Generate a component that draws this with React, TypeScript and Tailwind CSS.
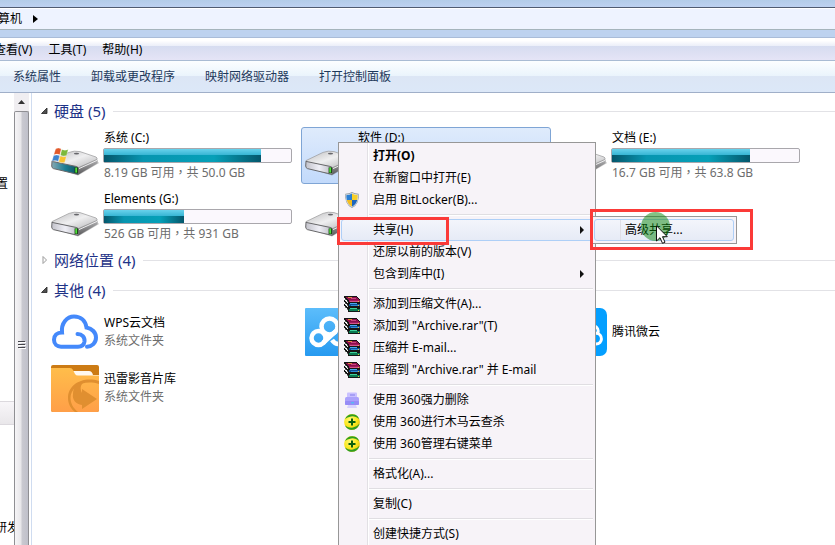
import type { ReactNode } from "react";

const textFont = "font-['Noto_Sans','Noto_Sans_CJK_SC',sans-serif]";

function DriveIcon({ system = false }: { system?: boolean }) {
  const id = system ? "sys" : "hdd";
  return (
    <svg viewBox="0 0 48 48" className="size-12 shrink-0" aria-hidden="true">
      <defs>
        <linearGradient id={`${id}-top`} x1="0" y1="0" x2="1" y2="1">
          <stop offset="0" stopColor="#bcbcbe" />
          <stop offset="0.5" stopColor="#efeff0" />
          <stop offset="1" stopColor="#b4b4b6" />
        </linearGradient>
        <linearGradient id={`${id}-side`} x1="0" y1="0" x2="0" y2="1">
          <stop offset="0" stopColor="#b9b9bb" />
          <stop offset="1" stopColor="#5a5a5c" />
        </linearGradient>
        <linearGradient id={`${id}-front`} x1="0" y1="0" x2="1" y2="0">
          <stop offset="0" stopColor={system ? "#86a9b4" : "#c3c3cb"} />
          <stop offset="0.5" stopColor={system ? "#1d7d93" : "#efeff6"} />
          <stop offset="1" stopColor={system ? "#0f4d5c" : "#b9b9c1"} />
        </linearGradient>
      </defs>
      <path d="M3 36 L27 43.5 L48 31 L46 29 Z" fill="#000" opacity="0.25" />
      <path d="M26 34.5 L46 26.5 Q47.5 29 46 31.5 L28 42.2 L26 42.5 Z" fill={`url(#${id}-side)`} />
      <path d="M1 28.6 L18 20.4 Q23 18.4 29 19.6 L45 25 Q47 26 45.5 27.6 L27.5 35.6 L2 30.4 Q0 29.6 1 28.6 Z" fill={`url(#${id}-top)`} stroke="#98989a" strokeWidth="0.7" />
      <path d="M1 29.4 L25 34.4 Q27.6 35 27.6 37 L27.2 42.4 L2.4 36.6 Q0.8 36 0.7 34 Z" fill={`url(#${id}-front)`} stroke="#69696b" strokeWidth="1" />
      <path d="M28 36.6 L46 28.4" stroke="#ededee" strokeWidth="1" />
      <ellipse cx="25.5" cy="21.6" rx="2.6" ry="0.9" fill="#66666a" />
      <rect x="23.6" y="35.4" width="3.4" height="5.8" fill="#173d12" />
      <rect x="24.3" y="35.6" width="1.8" height="5" fill="#4ee33a" />
      {system && (
        <g stroke="#fff" strokeWidth="0.3">
          <path d="M4.6 17 Q7.4 15.2 10.2 17 L8.8 22.8 Q6 21.4 2.8 22.8 Z" fill="#e2592a" />
          <path d="M10.8 17.4 Q14 19 17.2 17.4 L15.6 23.4 Q12.4 24.6 9.4 23.2 Z" fill="#7cb93c" />
          <path d="M2.6 23.6 Q5.8 22.2 8.6 23.6 L7.2 29.4 Q4.2 27.8 1 29.2 Z" fill="#3d83cf" />
          <path d="M9.2 24 Q12.2 25.4 15.4 24.2 L13.8 30.2 Q10.8 31.4 7.8 29.8 Z" fill="#f7c331" />
        </g>
      )}
    </svg>
  );
}

function WpsCloudIcon() {
  return (
    <svg viewBox="0 0 48 48" className="size-12 shrink-0" fill="none" stroke="#4489fb" strokeWidth="4" strokeLinecap="round" aria-hidden="true">
      <path d="M26.5 26 C31 26 34 29 33.500 33.500 C33 37 30.500 38.700 27 38.700 H10 C6 38.700 3 36 3 31.800 C3 27.500 6 24.500 11 24.500 C10 15 16 8.500 23 8.500 C30 8.500 34.500 13 35.500 19.500 C41 20.500 45 24.500 45 29.500 C45 35 41 38.500 36 38.700" />
    </svg>
  );
}

function VideoFolderIcon() {
  return (
    <svg viewBox="0 0 48 48" className="size-12 shrink-0" aria-hidden="true">
      <defs>
        <linearGradient id="folder" x1="0" y1="0" x2="0" y2="1">
          <stop offset="0" stopColor="#ffbd4a" />
          <stop offset="1" stopColor="#ff9f48" />
        </linearGradient>
        <clipPath id="folder-clip">
          <rect y="1" width="48" height="47" rx="2" />
        </clipPath>
      </defs>
      <g clipPath="url(#folder-clip)">
        <rect y="1" width="48" height="47" fill="#cc7b14" />
        <path d="M20 7 H38 Q41 7 42 11 H48 V20 H20 Z" fill="#fff8ee" />
        <path d="M0 4 H19 Q21 4 22 6 L24 10 Q25 11.500 27 11.500 H48 V48 H0 Z" fill="url(#folder)" />
        <path d="M48 17 C31 12 17 21 17 34 C17 40 20 45 24 48 H27 C22 44 19.500 39 19.500 34 C19.500 24 31 15 48 20 Z" fill="#e08f30" />
        <path d="M22 30 C22 22 27 19 33 18 C29 21 29 25 31 29 L31 25 L46 35 L31 45 L31 41 C25 40 21 36 22 30 Z" fill="#e08f30" />
      </g>
    </svg>
  );
}

function NetDiskIcon() {
  return (
    <svg viewBox="0 0 48 48" className="size-12 shrink-0" aria-hidden="true">
      <defs>
        <linearGradient id="netdisk" x1="0" y1="0" x2="0" y2="1">
          <stop offset="0" stopColor="#5cbdfb" />
          <stop offset="1" stopColor="#269af0" />
        </linearGradient>
      </defs>
      <rect width="48" height="48" rx="1" fill="url(#netdisk)" />
      <g fill="none" stroke="#fff" strokeWidth="4.500">
        <circle cx="13.500" cy="30" r="7" />
        <circle cx="24.500" cy="18.500" r="8" />
        <path d="M18 35 L31 23 M27 32 Q30 36.500 34 36" />
      </g>
    </svg>
  );
}

function WeiyunIcon() {
  return (
    <svg viewBox="0 0 48 48" className="size-12 shrink-0" aria-hidden="true">
      <rect width="48" height="48" rx="7" fill="#049fff" />
      <g fill="none" stroke="#fff" strokeWidth="3">
        <path d="M7 31 C7 24 14 22 18 26 L28 36 H37 C44 36 44.500 26 37 25 L32 30 M39 26 C40 22 38 19 36 18" />
      </g>
    </svg>
  );
}

function ShieldIcon() {
  return (
    <svg viewBox="0 0 16 16" className="size-4" aria-hidden="true">
      <defs>
        <clipPath id="shield">
          <path d="M8 1.500 Q10.500 3 13.500 3 Q14.500 11 8 14.700 Q1.500 11 2.500 3 Q5.500 3 8 1.500 Z" />
        </clipPath>
      </defs>
      <path d="M8 0 Q10.500 1.800 14.600 1.800 Q16 12 8 16 Q0 12 1.400 1.800 Q5.500 1.800 8 0 Z" fill="#8b949c" />
      <path d="M8 0.800 Q10.500 2.400 14 2.400 Q15.300 11.600 8 15.400 Q0.700 11.600 2 2.400 Q5.500 2.400 8 0.800 Z" fill="#dfe5ea" />
      <g clipPath="url(#shield)">
        <rect width="8" height="8" fill="#2b7fd4" />
        <rect x="8" width="8" height="8" fill="#f8cf2b" />
        <rect y="8" width="8" height="8" fill="#f3bd20" />
        <rect x="8" y="8" width="8" height="8" fill="#1f66bd" />
      </g>
    </svg>
  );
}

function ArchiveIcon() {
  return (
    <svg viewBox="0 0 16 16" className="size-4" shapeRendering="crispEdges" aria-hidden="true">
      <path d="M0 0 H12 L16 4 V16 H5 L0 12 Z" fill="#161616" />
      <path d="M1 1 H12 L15 4 H5 Z" fill="#8d0f4c" />
      <path d="M4 1 H8 V2 H4 Z" fill="#e08a3c" />
      <path d="M7 2 H12 V3 H7 Z" fill="#c9447f" />
      <path d="M5 4 H16 V6 H5 Z" fill="#a01a5c" />
      <path d="M6 5 H14 V6 H6 Z" fill="#d2558f" />
      <path d="M6 7 H13 V8 H6 Z" fill="#4aa8ee" />
      <path d="M5 8 H16 V10 H5 Z" fill="#0c5096" />
      <path d="M7 9 H14 V10 H7 Z" fill="#2f8ad8" />
      <path d="M6 12 H13 V13 H6 Z" fill="#3fd09a" />
      <path d="M5 13 H16 V15 H5 Z" fill="#0a7a52" />
      <path d="M14 5 H15 V6 H14 Z M14 9 H15 V10 H14 Z M14 14 H15 V15 H14 Z" fill="#e7c63c" />
      <path d="M0 2 L4 5 V7 L0 4 Z M0 6 L4 9 V11 L0 8 Z M0 10 L4 13 V15 L0 12 Z" fill="#f4f4f4" />
      <path d="M1 3 h1 v1 h-1 Z M3 5 h1 v1 h-1 Z M1 7 h1 v1 h-1 Z M3 9 h1 v1 h-1 Z M1 11 h1 v1 h-1 Z M3 13 h1 v1 h-1 Z" fill="#777" />
    </svg>
  );
}

function ShredderIcon() {
  return (
    <svg viewBox="0 0 16 16" className="size-4" aria-hidden="true">
      <rect x="3" y="0.500" width="10" height="7" rx="1" fill="#c9c0ff" />
      <rect x="6" y="2" width="5" height="2" fill="#a79ff5" />
      <rect x="1" y="5" width="14" height="8" rx="1.500" fill="#aba1fb" />
      <rect x="1" y="9" width="14" height="4" rx="1" fill="#978cf6" />
      <rect x="7" y="10" width="3" height="1.500" fill="#58b9f5" />
      <path d="M4 13 H12 L13 16 H3 Z" fill="#d8d2fd" />
    </svg>
  );
}

function SafeguardIcon() {
  return (
    <svg viewBox="0 0 16 16" className="size-4" aria-hidden="true">
      <defs>
        <radialGradient id="safeguard" cx="0.4" cy="0.35" r="0.7">
          <stop offset="0" stopColor="#fff97a" />
          <stop offset="0.6" stopColor="#fbe71c" />
          <stop offset="1" stopColor="#e3b80c" />
        </radialGradient>
      </defs>
      <circle cx="8" cy="8" r="7.900" fill="url(#safeguard)" />
      <path d="M1 5 Q3.500 -0.500 10 0.400 Q14 1.200 15.200 5 Q11 1.500 7 2.600 Q3 3.400 1 5 Z" fill="#2e9e22" />
      <path d="M15.600 9.500 Q13.500 16.500 6.500 15.800 Q2.500 15 1 11.500 Q5 14.500 9 13.600 Q13.500 12.500 15.600 9.500 Z" fill="#2e9e22" />
      <path d="M8 4.500 V11.500 M4.500 8 H11.500" stroke="#0a5f10" strokeWidth="2" />
    </svg>
  );
}

function GroupHeader({ title, open = true }: { title: string; open?: boolean }) {
  return (
    <h2 className="flex h-[30px] items-center">
      <button type="button" aria-expanded={open} className="flex items-center gap-1.5 pl-2 text-[15px] leading-5 text-[#1e3287]">
        <svg viewBox="0 0 8 8" className="size-2" aria-hidden="true">
          {open ? (
            <path d="M7 1 V6.500 H1.500 Z" fill="#505050" stroke="#222" strokeWidth="0.800" />
          ) : (
            <path d="M3 0.500 L6.500 4 L3 7.500 Z" fill="#fff" stroke="#9a9a9a" />
          )}
        </svg>
        {title}
      </button>
      <span className="ml-2 h-px flex-1 bg-[#e2e2e6]" />
    </h2>
  );
}

function Drive({ name, used, detail, system, selected }: { name?: string; used?: number; detail?: string; system?: boolean; selected?: boolean }) {
  return (
    <li
      className={
        selected
          ? "flex h-[57px] items-center gap-1 rounded-[3px] border border-[#7fa5d5] bg-linear-to-b from-[#dfebfc] to-[#c2dafb] px-[3px]"
          : "flex h-[57px] items-center gap-1 border border-transparent px-[3px]"
      }
    >
      <DriveIcon system={system} />
      <div className="flex h-full min-w-0 flex-1 flex-col pt-px pr-px">
        {name && <span className="h-[18px] pl-px leading-[18px] whitespace-nowrap">{name}</span>}
        {used !== undefined && (
          <div role="progressbar" aria-label={name} aria-valuenow={used} className="my-px h-[15px] rounded-[2px] border border-[#a9a7ac] bg-[#fbf8fd]">
            <div className="h-full bg-[linear-gradient(180deg,#68d2ec_0%,#35b4d3_48%,transparent_50%),linear-gradient(90deg,#04566b_0%,#0795b0_25%,#06a0b8_70%,#04566b_100%)]" style={{ width: `${used}%` }} />
          </div>
        )}
        {detail && <span className="h-[18px] pl-px font-['Noto_Sans','Noto_Sans_CJK_TC',sans-serif] leading-[18px] whitespace-nowrap text-[#6d6d6d]">{detail}</span>}
      </div>
    </li>
  );
}

function Place({ icon, name, kind }: { icon: ReactNode; name?: string; kind?: string }) {
  return (
    <li className="flex h-[52px] items-center gap-1 px-1">
      {icon}
      <div className="flex flex-col pl-px leading-[18px] whitespace-nowrap">
        {name && <span>{name}</span>}
        {kind && <span className="text-[#6d6d6d]">{kind}</span>}
      </div>
    </li>
  );
}

type Item = { label: string; icon?: ReactNode; bold?: boolean; submenu?: boolean; active?: boolean };

const menuGroups: Item[][] = [
  [
    { label: "打开(O)", bold: true },
    { label: "在新窗口中打开(E)" },
    { label: "启用 BitLocker(B)...", icon: <ShieldIcon /> },
  ],
  [
    { label: "共享(H)", submenu: true, active: true },
    { label: "还原以前的版本(V)" },
    { label: "包含到库中(I)", submenu: true },
  ],
  [
    { label: "添加到压缩文件(A)...", icon: <ArchiveIcon /> },
    { label: '添加到 "Archive.rar"(T)', icon: <ArchiveIcon /> },
    { label: "压缩并 E-mail...", icon: <ArchiveIcon /> },
    { label: '压缩到 "Archive.rar" 并 E-mail', icon: <ArchiveIcon /> },
  ],
  [
    { label: "使用 360强力删除", icon: <ShredderIcon /> },
    { label: "使用 360进行木马云查杀", icon: <SafeguardIcon /> },
    { label: "使用 360管理右键菜单", icon: <SafeguardIcon /> },
  ],
  [{ label: "格式化(A)..." }],
  [{ label: "复制(C)" }],
  [{ label: "创建快捷方式(S)" }],
];

function MenuRow({ item }: { item: Item }) {
  return (
    <button
      type="button"
      role="menuitem"
      aria-haspopup={item.submenu ? "menu" : undefined}
      className={
        item.active
          ? "flex h-[22px] w-full items-center rounded-[3px] border border-[#aecff7] bg-linear-to-b from-[#f3f5fb] to-[#e6ebf6] pr-2 text-left"
          : "flex h-[22px] w-full items-center border border-transparent pr-2 text-left"
      }
    >
      <span className="flex w-[26px] shrink-0 items-center pl-0.5">{item.icon}</span>
      <span className={item.bold ? "flex-1 pl-[5px] font-bold whitespace-nowrap" : "flex-1 pl-[5px] whitespace-nowrap"}>{item.label}</span>
      {item.submenu && (
        <svg viewBox="0 0 4 8" className="h-2 w-1" aria-hidden="true">
          <path d="M0 0 L4 4 L0 8 Z" fill="#111" />
        </svg>
      )}
    </button>
  );
}

function ContextMenu() {
  return (
    <div role="menu" className="absolute top-[142px] bottom-0 left-[338px] w-[258px] border border-b-0 border-[#979797] bg-[#f7f3f8] bg-[linear-gradient(90deg,transparent_28px,#e2e0e4_28px,#e2e0e4_29px,#fff_29px,#fff_30px,transparent_30px)] p-0.5">
      {menuGroups.map((group, index) => (
        <div key={group[0].label}>
          {index > 0 && <hr className="my-[3px] ml-7 h-0.5 border-0 border-t border-b border-t-[#e0dee2] border-b-white" />}
          {group.map((item) => (
            <MenuRow key={item.label} item={item} />
          ))}
        </div>
      ))}
    </div>
  );
}

export default function App() {
  return (
    <div className={`relative flex h-screen flex-col overflow-hidden bg-white text-xs text-black ${textFont}`}>
      <div className="h-[7px] shrink-0 bg-linear-to-b from-[#b3cce8] to-[#bdd1f0]" />
      <div className="flex h-[23px] shrink-0 items-center gap-[11px] border-t border-b border-t-[#4f5b70] border-b-[#a5b4bc] bg-[#eef3ff] shadow-[inset_0_1px_0_#fff]">
        <span className="-ml-0.5">算机</span>
        <svg viewBox="0 0 5 8" className="h-2 w-[5px]" aria-hidden="true">
          <path d="M0 0 L5 4 L0 8 Z" fill="#000" />
        </svg>
      </div>
      <div className="h-[7px] shrink-0 bg-[#bdd2ef]" />
      <nav className="flex h-6 shrink-0 items-center gap-4 border-t border-b border-t-[#a9bcd8] border-b-[#a9bbd3] bg-[linear-gradient(180deg,#fff_0,#fff_12%,#f0f2fa_30%,#eceff9_36%,#d6dcf0_37%,#e5e4f6_100%)] pt-0.5">
        <button type="button" className="-ml-1.5">查看(V)</button>
        <button type="button">工具(T)</button>
        <button type="button">帮助(H)</button>
      </nav>
      <div className="flex h-8 shrink-0 items-center gap-[30px] border-b border-[#a0afc8] bg-[linear-gradient(180deg,#fcfeff_0,#eaf4fc_48%,#dce6f5_49%,#dce8f8_100%)] pl-[13px] text-[#1e395b]">
        <button type="button">系统属性</button>
        <button type="button">卸载或更改程序</button>
        <button type="button">映射网络驱动器</button>
        <button type="button">打开控制面板</button>
      </div>

      <div className="flex min-h-0 flex-1">
        <aside className="flex w-[14px] shrink-0 flex-col items-center overflow-hidden leading-[18px] whitespace-nowrap">
          <span className="-ml-1 mt-[82px] self-start">置</span>
          <span className="mt-[208px] h-6 w-full border-t border-b border-[#dcd9de] bg-linear-to-b from-[#f8f6f9] to-[#e9e7ea]" />
          <span className="mt-[94px]">研发</span>
        </aside>
        <div className="flex w-[15px] shrink-0 flex-col bg-[#f0eef1]">
          <button type="button" aria-label="向上滚动" className="flex h-[18px] shrink-0 items-center justify-center">
            <svg viewBox="0 0 7 4" className="h-1 w-[7px]" aria-hidden="true">
              <path d="M0 4 L3.500 0 L7 4 Z" fill="#333" />
            </svg>
          </button>
          <div className="flex flex-1 items-center justify-center rounded-t-[2px] border border-b-0 border-[#8f8f93] bg-[linear-gradient(90deg,#f6f5f7_0%,#e8e7ea_45%,#c9c9d0_55%,#bfc0ca_100%)]">
            <svg viewBox="0 0 8 8" className="mt-8 size-2" shapeRendering="crispEdges" aria-hidden="true">
              <path d="M0 0 H7 V1 H0 Z M0 3 H7 V4 H0 Z M0 6 H7 V7 H0 Z" fill="#44444a" />
              <path d="M1 1 H8 V2 H1 Z M1 4 H8 V5 H1 Z M1 7 H8 V8 H1 Z" fill="#fff" />
            </svg>
          </div>
        </div>
        <div className="w-[3px] shrink-0 border-r border-[#cfdcf0] bg-white" />

        <main className="min-w-0 flex-1 pt-[3px]">
          <GroupHeader title="硬盘 (5)" />
          <ul className="grid grid-cols-[repeat(3,250px)] gap-1 pt-px pl-[15px]">
            <Drive name="系统 (C:)" used={84} detail="8.19 GB 可用，共 50.0 GB" system />
            <Drive name="软件 (D:)" selected />
            <Drive name="文档 (E:)" used={74} detail="16.7 GB 可用，共 63.8 GB" />
            <Drive name="Elements (G:)" used={43} detail="526 GB 可用，共 931 GB" />
            <Drive />
          </ul>
          <GroupHeader title="网络位置 (4)" open={false} />
          <GroupHeader title="其他 (4)" />
          <ul className="grid grid-cols-[repeat(3,250px)] gap-1 pt-px pl-[15px]">
            <Place icon={<WpsCloudIcon />} name="WPS云文档" kind="系统文件夹" />
            <Place icon={<NetDiskIcon />} />
            <Place icon={<WeiyunIcon />} name="腾讯微云" />
            <Place icon={<VideoFolderIcon />} name="迅雷影音片库" kind="系统文件夹" />
          </ul>
        </main>
      </div>

      <ContextMenu />
      <div role="menu" className="absolute top-[216px] left-[591px] w-[146px] border border-[#979797] bg-[#f7f3f8] p-0.5">
        <button type="button" role="menuitem" className="flex h-[22px] w-full items-center rounded-[3px] border border-[#aecff7] bg-linear-to-b from-[#f3f5fb] to-[#e6ebf6] text-left">
          <span className="h-full w-[26px] border-r border-[#e0dfe6]" />
          <span className="pl-1">高级共享...</span>
        </button>
      </div>
      <div className="absolute top-[217px] left-[337px] h-7 w-28 border-3 border-[#fb3a38]" />
      <div className="absolute top-[209px] left-[590px] h-[41px] w-[163px] border-3 border-[#fb3a38]" />
      <div className="absolute top-[212px] left-[641px] size-[29px] rounded-full bg-[#0a850c]/50" />
      <svg viewBox="0 0 12 19" className="absolute top-[225px] left-[656px] h-[19px] w-3" aria-hidden="true">
        <path d="M0.500 0.800 V16 L4 12.700 L6.500 18.300 L9 17.200 L6.500 11.700 H11.300 Z" fill="#fff" stroke="#111" />
      </svg>
    </div>
  );
}
